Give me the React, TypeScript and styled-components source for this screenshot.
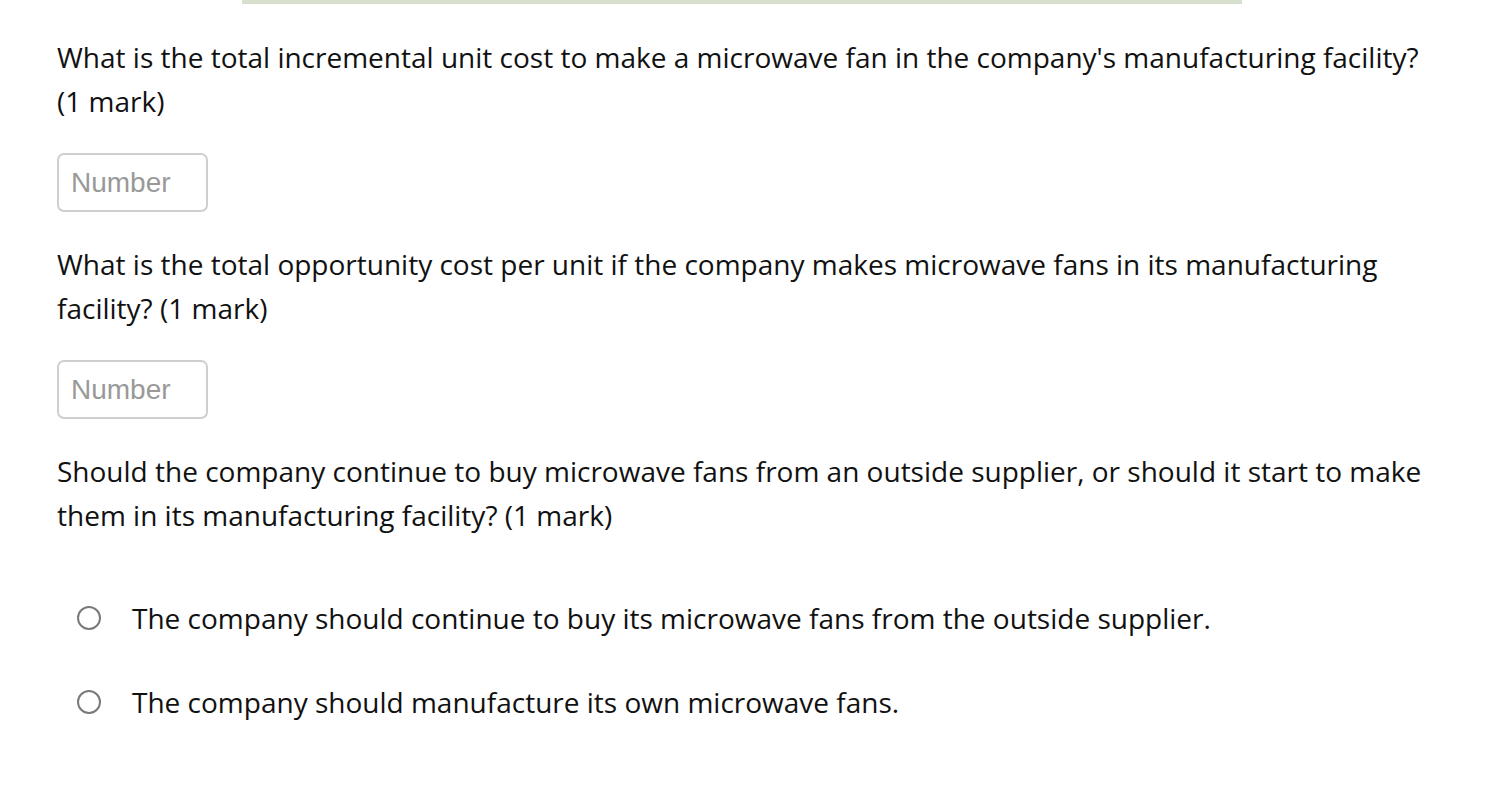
import React from "react";
import styled, {createGlobalStyle} from "styled-components";

const GlobalStyle = createGlobalStyle`
  body {
    margin: 0;
    background: #ffffff;
    font-family: "Open Sans", "Noto Sans", sans-serif;
  }
`;

const Page = styled.div`
  display: flex;
  flex-direction: column;
  width: 1496px;
  min-height: 792px;
  background: #ffffff;
`;

const TopBar = styled.div`
  width: 1000px;
  height: 4px;
  margin-left: 242px;
  background-color: #d6e0cd;
`;

const Content = styled.div`
  display: flex;
  flex-direction: column;
  padding: 31px 60px 0 57px;
`;

const Question = styled.p<{ $gap: number }>`
  margin: 0 0 ${p => p.$gap}px 0;
  font-size: 28px;
  line-height: 44px;
  color: #111111;
  max-width: 1382px;
`;

const NumberInput = styled.input`
  box-sizing: border-box;
  width: 151px;
  height: 59px;
  margin: 0 0 30px 0;
  padding: 0 12px;
  border: 2px solid #cfcfcf;
  border-radius: 7px;
  font-family: "Liberation Sans", Arial, sans-serif;
  font-size: 28px;
  color: #333;
  outline: none;
  &::placeholder {
    color: #999999;
  }
`;

const OptionList = styled.div`
  display: flex;
  flex-direction: column;
  gap: 40px;
  margin-top: 59px;
  padding-left: 20px;
`;

const OptionRow = styled.label`
  display: flex;
  align-items: center;
  height: 44px;
  font-size: 28px;
  color: #111111;
`;

const RadioCircle = styled.span`
  box-sizing: border-box;
  width: 24px;
  height: 24px;
  border: 2px solid #7a7a7a;
  border-radius: 50%;
  margin-right: 31px;
  flex-shrink: 0;
`;

const options = [
    "The company should continue to buy its microwave fans from the outside supplier.",
    "The company should manufacture its own microwave fans.",
];

export default function App() {
    return (
        <Page>
            <GlobalStyle />
            <TopBar />
            <Content>
                <Question $gap={30}>
                    What is the total incremental unit cost to make a microwave fan in the company's manufacturing facility? (1 mark)
                </Question>
                <NumberInput placeholder="Number" />
                <Question $gap={30}>
                    What is the total opportunity cost per unit if the company makes microwave fans in its manufacturing facility? (1 mark)
                </Question>
                <NumberInput placeholder="Number" />
                <Question $gap={0}>
                    Should the company continue to buy microwave fans from an outside supplier, or should it start to make them in its manufacturing facility? (1 mark)
                </Question>
                <OptionList>
                    {options.map((item) => (
                        <OptionRow key={item}>
                            <RadioCircle />
                            {item}
                        </OptionRow>
                    ))}
                </OptionList>
            </Content>
        </Page>
    );
}
